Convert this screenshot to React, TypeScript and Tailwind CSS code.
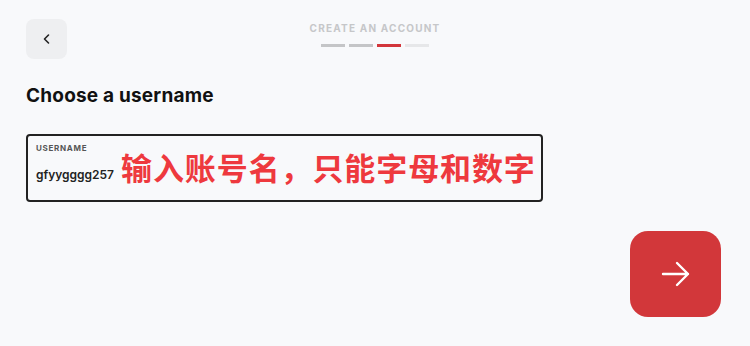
import React from "react";

export default function App() {
  return (
    <div className="w-[750px] h-[346px] bg-[#f8f9fb] relative overflow-hidden" style={{ fontFamily: "Inter, 'Noto Sans', sans-serif" }}>
      <div className="flex flex-col px-[26px] pt-[19px]">
        <div className="flex items-start">
          <button className="w-[41px] h-[40px] rounded-[8px] bg-[#eeeff1] flex items-center justify-center">
            <svg width="14" height="14" viewBox="0 0 14 14" fill="none">
              <path d="M8.5 3 L4.5 7 L8.5 11" stroke="#222" strokeWidth="1.6" strokeLinecap="round" strokeLinejoin="round" />
            </svg>
          </button>
          <div className="flex-1 flex flex-col items-center pt-[3px] pr-[41px]">
            <div className="text-[10px] font-bold tracking-[1.2px] text-[#c6c7c9] leading-[12px]">CREATE AN ACCOUNT</div>
            <div className="flex gap-[4px] mt-[10px]">
              <div className="w-[24px] h-[3px] bg-[#c4c5c7]" />
              <div className="w-[24px] h-[3px] bg-[#c4c5c7]" />
              <div className="w-[24px] h-[3px] bg-[#d2363b]" />
              <div className="w-[24px] h-[3px] bg-[#e6e7e9]" />
            </div>
          </div>
        </div>
        <h1 className="mt-[25px] text-[19px] font-bold text-[#111] leading-[24px] tracking-[0.2px]">Choose a username</h1>
        <div className="mt-[26px] w-[517px] h-[68px] border-2 border-[#222] rounded-[4px] flex flex-col px-[8px] pt-[7px]">
          <div className="text-[8px] font-bold tracking-[0.7px] text-[#555] leading-[10px]">USERNAME</div>
          <div className="flex items-start -mt-[3px] whitespace-nowrap">
            <span className="shrink-0 mt-[17px] text-[12px] text-[#222] leading-[16px] font-semibold">gfyygggg257</span>
            <span className="shrink-0 ml-[7px] text-[31px] font-semibold text-[#ee393e] leading-[34px] tracking-[0.9px]" style={{ fontFamily: "'Noto Sans CJK SC', sans-serif" }}>输入账号名，只能字母和数字</span>
          </div>
        </div>
        <div className="flex justify-end mt-[29px] pr-[3px]">
          <button className="w-[91px] h-[86px] rounded-[18px] bg-[#d2373a] flex items-center justify-center">
            <svg width="30" height="26" viewBox="0 0 30 26" fill="none">
              <path d="M2 13 H27 M16 2 L27 13 L16 24" stroke="#fff" strokeWidth="2.4" strokeLinecap="round" strokeLinejoin="round" />
            </svg>
          </button>
        </div>
      </div>
    </div>
  );
}
